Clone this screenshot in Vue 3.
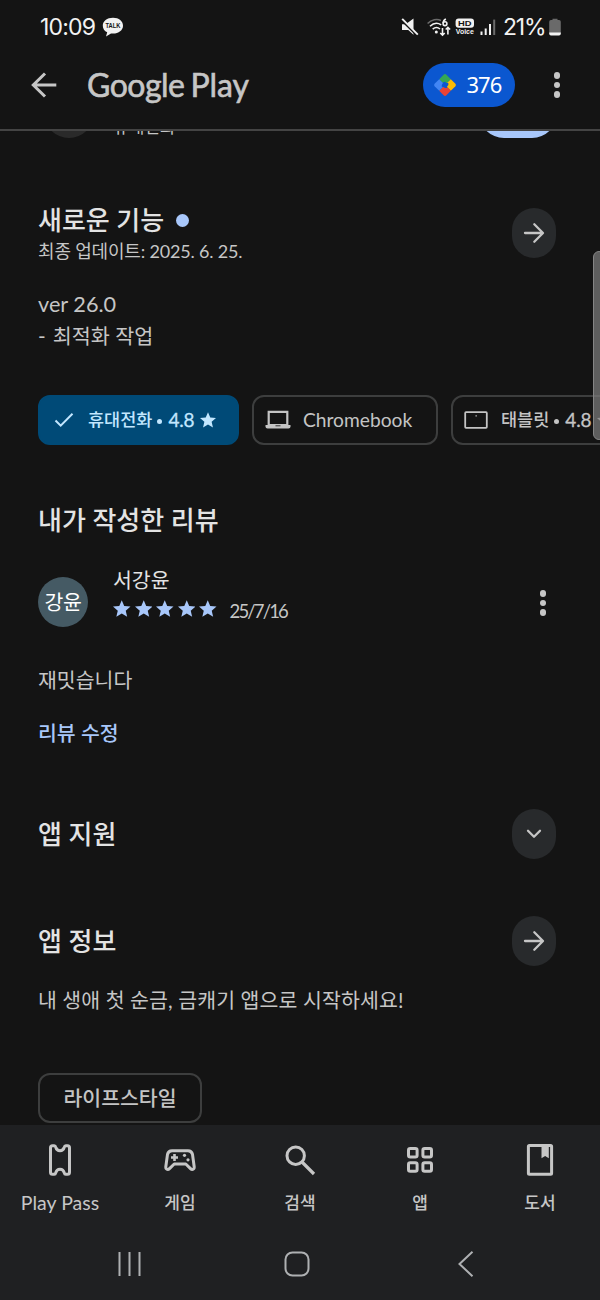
<script setup>
const star = 'M12 1.300l3.100 7.300 7.900.7-6 5.200 1.800 7.700L12 18.100l-6.800 4.100L7 14.500 1 9.300l7.900-.7z'
const tabs = [
  { id: 'pass', label: 'Play Pass' },
  { id: 'games', label: '게임' },
  { id: 'search', label: '검색' },
  { id: 'apps', label: '앱' },
  { id: 'books', label: '도서' },
]
</script>

<template>
  <div class="screen">
    <header>
      <div class="status">
        <span class="time">10:09</span>
        <svg class="talk" width="22" height="20" viewBox="0 0 22 20">
          <path d="M11 .8C5 .8.8 4.2.8 8.7c0 2.9 1.7 5.3 4.4 6.6L4 19.4l5-3c.7.1 1.3.1 2 .1 5.700 0 10-3.300 10-7.800S17 .8 11 .8z" fill="#f2f2f2" />
          <text x="11" y="11.200" text-anchor="middle" textLength="15" lengthAdjust="spacingAndGlyphs">TALK</text>
        </svg>
        <div class="system">
          <svg width="18" height="18" viewBox="0 0 18 18">
            <path d="M1 6.200h3.700L12.500.4v16.400L7.200 12H1z" fill="#f2f2f2" />
            <path d="M.3 1.500L16 17.200" stroke="#141414" stroke-width="2.400" />
            <path d="M1.200.8L16.800 16.600" stroke="#f2f2f2" stroke-width="1.900" />
          </svg>
          <svg class="wifi" width="24" height="19" viewBox="0 0 24 19" fill="none" stroke="#f2f2f2" stroke-width="1.600">
            <path d="M.6 5.500C4.500 1.500 10 .6 14 2.500" stroke="#6b6b6b" />
            <path d="M3 8.300c3.400-3.300 7.800-3.700 11.200-1.400M5.700 11.200c2.300-2 5.200-2 7.300-.2" />
            <circle cx="9.300" cy="14" r="1.500" fill="#f2f2f2" stroke="none" />
            <path d="M18.900.9c-1.800.8-2.800 2.400-2.800 4.400" />
            <circle cx="18" cy="5.700" r="1.900" />
            <path d="M15.500 10v7M13.300 15l2.200 2.200 2.200-2.200M20.900 16.500v-7M18.700 11.500l2.200-2.200 2.200 2.200" />
          </svg>
          <svg class="hd" width="20" height="18" viewBox="0 0 20 18">
            <rect x=".6" y=".6" width="18.400" height="9.200" rx="3" fill="#f2f2f2" />
            <text class="hdt" x="9.800" y="8" text-anchor="middle" textLength="13.500" lengthAdjust="spacingAndGlyphs">HD</text>
            <text class="voice" x="9.800" y="16.300" text-anchor="middle" textLength="18" lengthAdjust="spacingAndGlyphs">Voice</text>
          </svg>
          <svg class="signal" width="16" height="17" viewBox="0 0 16 17">
            <path d="M1.500 16v-3.500M5.700 16V9.500M10 16V5" stroke="#f2f2f2" stroke-width="2" />
            <path d="M14.200 16V.6" stroke="#6b6b6b" stroke-width="2" />
          </svg>
          <span class="pct">21%</span>
          <svg class="battery" width="12" height="18" viewBox="0 0 12 18">
            <path d="M3.500 2V.7h5V2H10a1.800 1.800 0 0 1 1.800 1.800v11.700H.2V3.800A1.800 1.800 0 0 1 2 2z" fill="#6a6a6a" />
            <path d="M.2 14.600h11.600v1.200a1.800 1.800 0 0 1-1.800 1.800H2a1.800 1.800 0 0 1-1.800-1.800z" fill="#f2f2f2" />
          </svg>
        </div>
      </div>
      <div class="appbar">
        <svg class="back" width="26" height="26" viewBox="0 0 26 26" fill="none" stroke="#c6c6c6" stroke-width="3">
          <path d="M25.300 13H2.500M14 1.500L2.300 13 14 24.500" />
        </svg>
        <div class="brand"><span class="g">Google</span><span class="p">Play</span></div>
        <div class="points">
          <svg width="22" height="22" viewBox="0 0 22 22">
            <path d="M11 11L5.200 5.200 9.600.8a2 2 0 0 1 2.800 0l4.400 4.400z" fill="#34a853" />
            <path d="M11 11l5.800-5.800 4.400 4.400a2 2 0 0 1 0 2.800l-4.400 4.400z" fill="#fbbc04" />
            <path d="M11 11l5.800 5.800-4.400 4.400a2 2 0 0 1-2.800 0l-4.400-4.400z" fill="#ea4335" />
            <path d="M11 11l-5.800 5.800L.8 12.400a2 2 0 0 1 0-2.800l4.400-4.400z" fill="#4285f4" />
            <path d="M11 7.600l1.300 1.400 2 .1.100 1.900-1.300 1.500-.2 1.500H11l-1.500-1.100-1.700-.1V11l.9-1.400.3-1.200z" fill="#0b57d0" />
          </svg>
          <span>376</span>
        </div>
        <div class="dots"><i /><i /><i /></div>
      </div>
    </header>

    <main>
      <div class="peek">
        <div class="peek-avatar" />
        <div class="peek-text">휴대전화</div>
        <div class="peek-pill" />
      </div>

      <section class="whatsnew">
        <div>
          <h2>새로운 기능<b class="dot" /></h2>
          <p class="updated">최종 업데이트: 2025. 6. 25.</p>
        </div>
        <div class="round">
          <svg width="22" height="22" viewBox="0 0 22 22"><path d="M2 11h17.500M11.300 2.200L20 11l-8.700 8.800" /></svg>
        </div>
      </section>
      <p class="notes"><span class="ver">ver 26.0</span><br /><span class="dash">-</span> 최적화 작업</p>

      <div class="chips">
        <div class="chip on">
          <svg width="20" height="16" viewBox="0 0 20 16" fill="none" stroke="#c2e7ff" stroke-width="2"><path d="M1.500 8.500l5.200 5.200L18.500 1.800" /></svg>
          <span class="device">휴대전화</span><i class="bullet" /><span class="score">4.8</span>
          <svg class="cstar" width="16" height="16" viewBox="1 1 22 22" fill="#c2e7ff"><path :d="star" /></svg>
        </div>
        <div class="chip chrome">
          <svg width="26" height="20" viewBox="0 0 26 20"><path d="M3.700 15V1.800h18.600V15z" fill="none" stroke="#c4c4c4" stroke-width="2.200" /><path d="M.5 15h25v1.500a2 2 0 0 1-2 2h-21a2 2 0 0 1-2-2z" fill="#c4c4c4" /><path d="M10.500 15.800h5" stroke="#333" stroke-width="1" /></svg>
          <span class="device">Chromebook</span>
        </div>
        <div class="chip tablet">
          <svg width="24" height="18" viewBox="0 0 24 18" fill="none" stroke="#c4c4c4" stroke-width="1.800"><rect x="1.200" y="1.200" width="21.600" height="15.600" rx=".8" /><path d="M11.500 4.800h1.300" stroke-width="1.200" /></svg>
          <span class="device">태블릿</span><i class="bullet" /><span class="score">4.8</span>
          <svg class="cstar" width="16" height="16" viewBox="1 1 22 22" fill="#c4c4c4"><path :d="star" /></svg>
        </div>
      </div>

      <h2 class="mine">내가 작성한 리뷰</h2>
      <div class="review">
        <div class="avatar">강윤</div>
        <div class="who">
          <div class="name">서강윤</div>
          <div class="rating">
            <svg v-for="n in 5" :key="n" width="17.500" height="17.500" viewBox="1 1 22 22" fill="#a8c7fa"><path :d="star" /></svg>
            <span>25/7/16</span>
          </div>
        </div>
        <div class="dots small"><i /><i /><i /></div>
      </div>
      <p class="comment">재밋습니다</p>
      <a class="edit">리뷰 수정</a>

      <section class="row support">
        <h2>앱 지원</h2>
        <div class="round"><svg width="22" height="22" viewBox="0 0 22 22"><path d="M5 7.700l6 6 6-6" /></svg></div>
      </section>
      <section class="row info">
        <h2>앱 정보</h2>
        <div class="round"><svg width="22" height="22" viewBox="0 0 22 22"><path d="M2 11h17.500M11.300 2.200L20 11l-8.700 8.800" /></svg></div>
      </section>
      <p class="desc">내 생애 첫 순금, 금캐기 앱으로 시작하세요!</p>
      <div class="chip tag">라이프스타일</div>
    </main>

    <footer>
      <nav>
        <div v-for="t in tabs" :key="t.id" class="tab">
          <svg width="34" height="34" viewBox="0 0 34 34" fill="none" stroke="#c6c6c6" stroke-width="3" stroke-linejoin="round">
            <path v-if="t.id === 'pass'" d="M9.500 2.800h1.800c.8 0 1.200.5 1.400 1.400.6 2.200 2.100 3.600 4.300 3.600s3.700-1.400 4.300-3.600c.2-.9.600-1.400 1.400-1.400h1.800a2 2 0 0 1 2 2v24.400a2 2 0 0 1-2 2h-1.800c-.8 0-1.200-.5-1.400-1.400-.6-2.200-2.100-3.600-4.300-3.600s-3.700 1.400-4.300 3.600c-.2.900-.6 1.400-1.400 1.400H9.500a2 2 0 0 1-2-2V4.800a2 2 0 0 1 2-2z" />
            <g v-else-if="t.id === 'games'">
              <path d="M9 7.700h16c2.400 0 4 1.300 4.500 3.700l1.700 12.300c.2 1.700-.6 2.800-1.900 2.800-.7 0-1.200-.3-1.800-.9L22.800 21H11.200l-4.700 4.600c-.6.6-1.100.9-1.800.9-1.300 0-2.100-1.100-1.900-2.800l1.700-12.300C5 9 6.600 7.700 9 7.700z" />
              <path d="M11.500 11v7M8 14.500h7" stroke-width="2.600" />
              <g fill="#c6c6c6" stroke="none"><circle cx="21.500" cy="12.300" r="1.600" /><circle cx="25" cy="16.800" r="1.600" /></g>
            </g>
            <g v-else-if="t.id === 'search'"><circle cx="12.700" cy="12.700" r="8.700" /><path d="M19 19l12 12" stroke-width="3.200" /></g>
            <g v-else-if="t.id === 'apps'">
              <rect x="5.500" y="5.500" width="8.600" height="8.600" rx="1.800" /><rect x="19.900" y="5.500" width="8.600" height="8.600" rx="1.800" />
              <rect x="5.500" y="19.700" width="8.600" height="8.600" rx="1.800" /><rect x="19.900" y="19.700" width="8.600" height="8.600" rx="1.800" />
            </g>
            <g v-else><rect x="5.400" y="2.600" width="23.200" height="28.700" rx="1" /><path d="M18.500 2.500h7.300v12.800l-3.650-2.300-3.650 2.300z" fill="#c6c6c6" stroke="none" /></g>
          </svg>
          <span :class="{ latin: t.id === 'pass' }">{{ t.label }}</span>
        </div>
      </nav>
      <div class="sysnav">
        <svg width="26" height="26" viewBox="0 0 26 26"><path d="M3.500 1v24M13.500 1v24M23.500 1v24" /></svg>
        <svg width="26" height="26" viewBox="0 0 26 26"><rect x="1.500" y="1.500" width="23" height="23" rx="7" /></svg>
        <svg width="26" height="26" viewBox="0 0 26 26"><path d="M20.500.8L7.500 13l13 12.200" /></svg>
      </div>
    </footer>
    <div class="scrollbar" />
  </div>
</template>

<style>
html, body { margin: 0; background: #141414; }
</style>

<style scoped>
.screen { position: relative; width: 600px; height: 1300px; overflow: hidden; display: flex; flex-direction: column; background: #141414; color: #c6c6c6; font-family: Lato, "Noto Sans CJK KR", sans-serif; }
h2, p { margin: 0; }
svg { display: block; flex: none; }
header { box-sizing: border-box; height: 131px; border-bottom: 2px solid #444; flex: none; }
.status { height: 54px; display: flex; align-items: center; padding: 0 39px 0 40px; color: #f2f2f2; }
.time { font: 23px/28px Inter, sans-serif; width: 62px; letter-spacing: -.8px; white-space: nowrap; }
.talk text { font: 700 7px "Liberation Sans", sans-serif; fill: #141414; }
.system { margin-left: auto; display: flex; align-items: center; }
.wifi { margin-left: 8px; }
.hd { margin-left: 4px; }
.hdt { font: 700 8px "Liberation Sans", sans-serif; fill: #141414; }
.voice { font: 700 7px "Liberation Sans", sans-serif; fill: #f2f2f2; }
.signal { margin-left: 5px; }
.pct { font: 23px/28px Inter, sans-serif; letter-spacing: -1.200px; margin-left: 7px; width: 46px; white-space: nowrap; }
.appbar { height: 62px; display: flex; align-items: center; padding: 0 40px 0 31px; }
.brand { margin-left: 30px; font-size: 32px; line-height: 40px; display: flex; gap: 6px; margin-top: -1px; -webkit-text-stroke: .6px #c6c6c6; }
.g { letter-spacing: -.5px; }
.p { letter-spacing: -.1px; }
.points { margin-left: auto; width: 92px; height: 44px; border-radius: 22px; background: #0b57d0; display: flex; align-items: center; gap: 11px; box-sizing: border-box; padding-left: 11px; color: #fff; font: 22px/28px "Noto Sans", sans-serif; letter-spacing: -1px; }
.points span { margin-top: -2px; }
.dots { display: flex; flex-direction: column; gap: 3px; margin-left: 39px; }
.dots i { width: 6.500px; height: 6.500px; border-radius: 50%; background: #c6c6c6; }
main { height: 994px; flex: none; padding: 0 44px 0 38px; box-sizing: border-box; overflow: hidden; }
.peek { height: 10px; overflow: hidden; display: flex; align-items: flex-end; }
.peek-avatar { width: 50px; height: 50px; border-radius: 50%; background: #2a2a2a; margin: 0 25px 3px 6px; }
.peek-text { font-size: 17px; line-height: 22px; margin-bottom: 3px; margin-left: -6px; }
.peek-pill { width: 78px; height: 50px; border-radius: 25px; background: #a8c7fa; margin: 0 -1px 3px auto; }
.whatsnew { margin-top: 63px; height: 62px; display: flex; justify-content: space-between; }
h2 { font-size: 26px; line-height: 32px; font-weight: 500; color: #e3e3e3; white-space: nowrap; }
.dot { display: inline-block; width: 13px; height: 13px; border-radius: 50%; background: #a8c7fa; margin-left: 12px; vertical-align: 3px; }
.updated { font-size: 18px; line-height: 30px; letter-spacing: -.18px; }
.round { width: 44px; height: 50px; border-radius: 22px; background: #282a2c; display: flex; align-items: center; justify-content: center; flex: none; }
.round svg { fill: none; stroke: #c6c6c6; stroke-width: 2.300; stroke-linecap: round; stroke-linejoin: round; }
.whatsnew .round { margin-top: 4px; }
.notes { margin-top: 23px; font-size: 20.700px; line-height: 31.500px; height: 63px; }
.ver { font-size: 21.700px; }
.dash { display: inline-block; width: 9.500px; }
.chips { margin-top: 43px; display: flex; gap: 13px; }
.chip { box-sizing: border-box; height: 50px; border: 2px solid #3d3e3e; border-radius: 12px; display: flex; align-items: center; flex: none; font-size: 18.500px; line-height: 26px; font-weight: 500; color: #c4c4c4; white-space: nowrap; }
.on { width: 201px; background: #004a77; border-color: #004a77; color: #c2e7ff; padding-left: 14px; }
.device { margin: 0 0 0 14px; }
.on .device, .tablet .device { font-size: 17.500px; }
.bullet { width: 5px; height: 5px; border-radius: 50%; background: currentColor; margin: 2px 6px 0 5px; }
.score { font-size: 19px; font-weight: 400; letter-spacing: -.2px; -webkit-text-stroke: .3px currentColor; }
.cstar { margin-left: 6px; }
.chrome { width: 186px; padding-left: 11px; font-weight: 400; }
.chrome .device { margin-left: 12px; font-size: 19.200px; }
.tablet { width: 200px; padding-left: 11px; }
.tablet .device { margin-left: 13px; }
.mine { margin-top: 59px; }
.review { margin-top: 30px; height: 62px; display: flex; }
.avatar { width: 50px; height: 50px; border-radius: 50%; background: #455a64; color: #fff; margin-top: 11px; font-size: 20.500px; line-height: 50px; text-align: center; letter-spacing: -.3px; }
.who { margin-left: 25px; }
.name { font-size: 20.500px; line-height: 28px; color: #e3e3e3; }
.rating { display: flex; align-items: center; gap: 4px; height: 29px; }
.rating span { font-size: 18.500px; line-height: 24px; margin: 5px 0 0 9px; letter-spacing: -1.850px; white-space: nowrap; }
.small { margin: 24px 10px 0 auto; }
.comment { margin-top: 36px; font-size: 20.500px; line-height: 32px; }
.edit { display: block; margin-top: 22px; font-size: 20.500px; line-height: 30px; font-weight: 500; color: #a8c7fa; }
.row { display: flex; justify-content: space-between; align-items: center; height: 50px; }
.support { margin-top: 61px; }
.info { margin-top: 57px; }
.desc { margin-top: 19px; font-size: 20.500px; letter-spacing: .13px; line-height: 30px; white-space: nowrap; }
.tag { margin-top: 58px; width: 164px; justify-content: center; font-size: 20.500px; }
footer { flex: 1; background: #1f2022; }
nav { display: flex; padding-top: 18px; height: 82px; }
.tab { flex: 1; display: flex; flex-direction: column; align-items: center; font-size: 17px; line-height: 24px; font-weight: 500; }
.tab span { margin-top: 14px; white-space: nowrap; }
.tab .latin { font-size: 19.500px; font-weight: 400; }
.sysnav { display: flex; justify-content: space-between; padding: 26px 122px 0 116px; }
.sysnav svg { fill: none; stroke: #aeb0b2; stroke-width: 2; }
.scrollbar { position: absolute; left: 593px; top: 251px; width: 12px; height: 189px; border-radius: 6px; box-sizing: border-box; background: rgba(125, 125, 125, .7); border: 1px solid #858585; }
</style>
